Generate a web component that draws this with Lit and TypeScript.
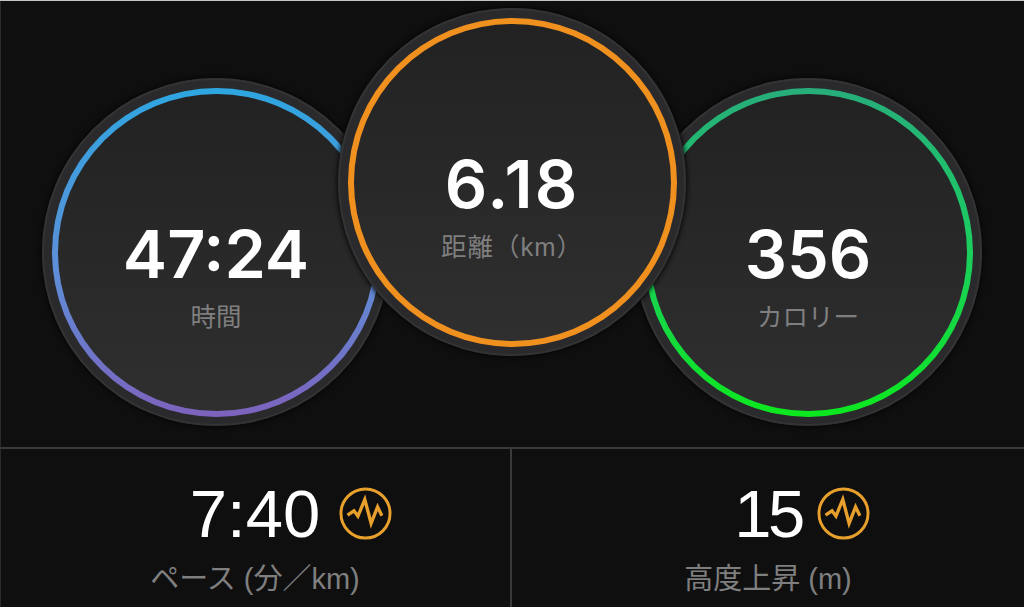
import { LitElement, html, css } from 'lit';
import { customElement } from 'lit/decorators.js';

@customElement('app-root')
export class AppRoot extends LitElement {
  static styles = css`
    :host {
      display: block;
      width: 1024px;
      height: 607px;
      overflow: hidden;
      background: #0f0f10;
      font-family: "Liberation Sans", "Noto Sans CJK JP", sans-serif;
    }
    .page {
      height: 607px;
      display: flex;
      flex-direction: column;
      border-top: 1px solid #c4c4c4;
      box-sizing: border-box;
      box-shadow: inset 1px 0 0 #2a2a2a;
    }
    .circles {
      height: 446px;
      box-sizing: border-box;
      padding: 7px 0 0 42px;
      display: flex;
      align-items: flex-start;
    }
    .disc {
      flex: none;
      width: 348px;
      height: 348px;
      box-sizing: border-box;
      padding: 9.5px;
      border-radius: 50%;
      background: #2a2a2c;
      box-shadow: inset 0 0 0 2px #333334, 0 0 5px 1px #060606;
    }
    .side { margin-top: 70px; }
    .middle { margin: 0 -52px; position: relative; z-index: 1; }
    .ring {
      width: 100%;
      height: 100%;
      box-sizing: border-box;
      padding: 6px;
      border-radius: 50%;
    }
    .blue { background: linear-gradient(180deg, #2ea6e0 0%, #5d8fd8 55%, #7d62bd 100%); }
    .orange { background: #f0901f; }
    .green { background: linear-gradient(180deg, #27ad7b 0%, #1ccb62 45%, #0ce81f 100%); }
    .face {
      height: 100%;
      box-sizing: border-box;
      border-radius: 50%;
      background: linear-gradient(180deg, #222223 0%, #2f2f30 100%);
      display: flex;
      flex-direction: column;
      align-items: center;
      padding-top: 122px;
    }
    .big {
      color: #fff;
      font-family: Inter, "Liberation Sans", sans-serif;
      font-size: 66.5px;
      line-height: 76px;
      font-weight: 600;
    }
    .spaced { letter-spacing: 2px; }
    .label {
      margin-top: 10px;
      color: #7f7f7f;
      font-size: 25.5px;
      line-height: 30px;
    }
    .wide { letter-spacing: 1px; }
    .bottom {
      flex: 1;
      display: flex;
      border-top: 2px solid #3a3a3b;
    }
    .cell {
      flex: 1;
      display: flex;
      flex-direction: column;
      align-items: center;
      padding-top: 27px;
    }
    .cell:first-child { flex: none; width: 510px; }
    .cell + .cell { border-left: 2px solid #3a3a3b; }
    .value {
      position: relative;
      color: #fff;
      font-size: 67px;
      line-height: 76px;
    }
    .tight { letter-spacing: -3.5px; }
    .value svg {
      position: absolute;
      left: calc(100% + 19px);
      top: 11px;
      width: 53px;
      height: 53px;
    }
    .tight svg { left: calc(100% + 15px); }
    .sub {
      margin-top: 11px;
      color: #7f7f7f;
      font-size: 29px;
      line-height: 32px;
    }
  `;

  private badge() {
    return html`<svg viewBox="0 0 54 54" fill="none" stroke="#e8a02c">
      <circle cx="27" cy="27" r="25" stroke-width="3"></circle>
      <path d="M8.7 28.7 L15.3 24.3 L19.3 29.7 L26.3 12.7 L32.7 37 L39.3 20.3 L43.7 29.3" stroke-width="3.4"></path>
    </svg>`;
  }

  render() {
    return html`
      <div class="page">
        <div class="circles">
          <div class="disc side">
            <div class="ring blue">
              <div class="face"><div class="big">47:24</div><div class="label">時間</div></div>
            </div>
          </div>
          <div class="disc middle">
            <div class="ring orange">
              <div class="face"><div class="big spaced">6.18</div><div class="label wide">距離（km）</div></div>
            </div>
          </div>
          <div class="disc side">
            <div class="ring green">
              <div class="face"><div class="big">356</div><div class="label">カロリー</div></div>
            </div>
          </div>
        </div>
        <div class="bottom">
          <div class="cell">
            <div class="value">7:40${this.badge()}</div>
            <div class="sub">ペース (分／km)</div>
          </div>
          <div class="cell">
            <div class="value tight">15${this.badge()}</div>
            <div class="sub">高度上昇 (m)</div>
          </div>
        </div>
      </div>
    `;
  }
}
